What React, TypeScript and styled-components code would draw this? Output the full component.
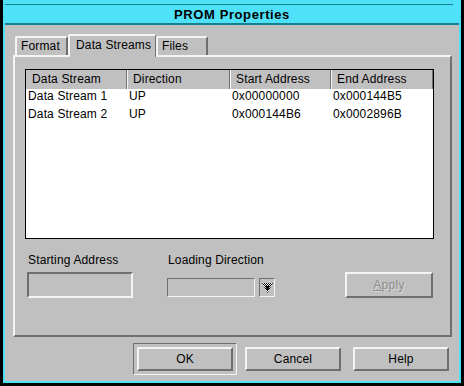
import React from 'react';
import styled, { createGlobalStyle, css } from 'styled-components';

const light = '#f4f4f4';
const dark = '#6f6f6f';
const face = '#c0c0c0';
const cyan = '#4fe1f8';
const teal = '#17808f';

const Global = createGlobalStyle`
  html, body { margin: 0; padding: 0; background: #000; }
  body { font-family: "Liberation Sans", Arial, sans-serif; font-size: 12px; color: #000; letter-spacing: 0.15px; }
`;

const Screen = styled.div`
  width: 464px;
  height: 386px;
  box-sizing: border-box;
  padding: 0 3px 3px 3px;
  background: #000;
  display: flex;
`;

const Frame = styled.div`
  flex: 1;
  display: flex;
  flex-direction: column;
  background: ${cyan};
  padding: 0 2px 2px 2px;
`;

const TitleBar = styled.div`
  height: 25px;
  box-sizing: border-box;
  padding-top: 4px;
  border-bottom: 2px solid ${teal};
  display: flex;
`;

const TitleInner = styled.div`
  flex: 1;
  border-top: 1px solid ${teal};
  margin-right: 6px;
  display: flex;
  align-items: center;
  justify-content: center;
  font-weight: bold;
  font-size: 13px;
  letter-spacing: 0.6px;
  padding-left: 6px;
`;

const Client = styled.div`
  flex: 1;
  background: ${face};
  display: flex;
  flex-direction: column;
  padding: 9px 7px 6px 8px;
`;

const TabStrip = styled.div`
  display: flex;
  align-items: flex-end;
  height: 21px;
  padding-left: 2px;
  position: relative;
  z-index: 1;
`;

const Tab = styled.div<{ $w: number; $active?: boolean }>`
  width: ${p => p.$w}px;
  box-sizing: border-box;
  height: 19px;
  border-top: 2px solid ${light};
  border-left: 2px solid ${light};
  border-right: 2px solid ${dark};
  border-top-left-radius: 2px;
  border-top-right-radius: 2px;
  padding-left: 4px;
  line-height: 16px;
  background: ${face};
  white-space: nowrap;
  ${p => p.$active && css`
    height: 23px;
    margin-bottom: -2px;
    padding-left: 6px;
    line-height: 18px;
    border-right-width: 1px;
  `}
`;

const Panel = styled.div`
  width: 439px;
  height: 282px;
  box-sizing: border-box;
  border: 2px solid;
  border-color: ${light} ${dark} ${dark} ${light};
  padding: 12px 16px 0 10px;
  display: flex;
  flex-direction: column;
`;

const Table = styled.div`
  width: 409px;
  height: 170px;
  box-sizing: border-box;
  border: 1px solid #000;
  background: #fff;
`;

const cols = '101px 103px 101px 102px';

const HeaderRow = styled.div`
  display: grid;
  grid-template-columns: ${cols};
  height: 19px;
  background: ${face};
`;

const HeaderCell = styled.div<{ $first?: boolean }>`
  border-left: 1px solid ${p => (p.$first ? face : light)};
  border-right: 1px solid ${dark};
  padding-left: 5px;
  line-height: 19px;
  white-space: nowrap;
`;

const Row = styled.div`
  display: grid;
  grid-template-columns: ${cols};
  height: 18px;
`;

const Cell = styled.div`
  padding-left: 2px;
  line-height: 14px;
  white-space: nowrap;
`;

const Controls = styled.div`
  display: flex;
  align-items: flex-start;
  margin-top: 14px;
`;

const Group = styled.div<{ $ml: number }>`
  display: flex;
  flex-direction: column;
  margin-left: ${p => p.$ml}px;
`;

const Label = styled.div<{ $mb: number }>`
  line-height: 14px;
  margin-bottom: ${p => p.$mb}px;
  padding-left: 1px;
  white-space: nowrap;
`;

const TextField = styled.div`
  width: 106px;
  height: 26px;
  box-sizing: border-box;
  border: 2px solid;
  border-color: ${dark} ${light} ${light} ${dark};
`;

const Combo = styled.div`
  display: flex;
  gap: 4px;
`;

const ComboField = styled.div`
  width: 88px;
  height: 19px;
  box-sizing: border-box;
  border: 1px solid;
  border-color: ${dark} ${light} ${light} ${dark};
`;

const ArrowBox = styled.div`
  width: 16px;
  height: 19px;
  box-sizing: border-box;
  border: 1px solid;
  border-color: ${dark} ${light} ${light} ${dark};
  display: flex;
  align-items: center;
  justify-content: center;
`;

const raised = css`
  box-sizing: border-box;
  border: 2px solid;
  border-color: ${light} ${dark} ${dark} ${light};
  background: ${face};
  display: flex;
  align-items: center;
  justify-content: center;
  font-size: 12px;
`;

const ApplyButton = styled.div`
  ${raised};
  width: 88px;
  height: 26px;
  margin-left: auto;
  margin-right: 1px;
  margin-top: 19px;
  color: #8c8c8c;
  text-shadow: 1px 1px 0 #d8d8d8;
  letter-spacing: 0.3px;
`;

const ButtonRow = styled.div`
  display: flex;
  justify-content: flex-end;
  gap: 4px;
  margin-top: 6px;
  margin-right: -1px;
`;

const ButtonSlot = styled.div<{ $default?: boolean }>`
  width: 104px;
  height: 32px;
  box-sizing: border-box;
  padding: 3px;
  border: 1px solid transparent;
  ${p => p.$default && css`
    border-color: ${dark} ${light} ${light} ${dark};
  `}
`;

const Button = styled.div`
  ${raised};
  width: 96px;
  height: 24px;
`;

const DownArrow = () => (
  <svg width="11" height="10" viewBox="0 0 11 10">
    <defs>
      <pattern id="dither" width="2" height="2" patternUnits="userSpaceOnUse">
        <rect width="2" height="2" fill="#fff" />
        <rect width="1" height="1" fill="#000" />
        <rect x="1" y="1" width="1" height="1" fill="#000" />
      </pattern>
    </defs>
    <polygon points="0,0 11,0 5.5,10" fill="url(#dither)" />
    <polygon points="3,3 8,3 5.5,8" fill="#000" />
  </svg>
);

const rows = [
  ['Data Stream 1', 'UP', '0x00000000', '0x000144B5'],
  ['Data Stream 2', 'UP', '0x000144B6', '0x0002896B'],
];

export default function App() {
  return (
    <>
      <Global />
      <Screen>
        <Frame>
          <TitleBar>
            <TitleInner>PROM Properties</TitleInner>
          </TitleBar>
          <Client>
            <TabStrip>
              <Tab $w={53}>Format</Tab>
              <Tab $w={88} $active>Data Streams</Tab>
              <Tab $w={52}>Files</Tab>
            </TabStrip>
            <Panel>
              <Table>
                <HeaderRow>
                  <HeaderCell $first>Data Stream</HeaderCell>
                  <HeaderCell>Direction</HeaderCell>
                  <HeaderCell>Start Address</HeaderCell>
                  <HeaderCell>End Address</HeaderCell>
                </HeaderRow>
                {rows.map(r => (
                  <Row key={r[0]}>
                    {r.map((c, i) => (
                      <Cell key={i}>{c}</Cell>
                    ))}
                  </Row>
                ))}
              </Table>
              <Controls>
                <Group $ml={2}>
                  <Label $mb={5}>Starting Address</Label>
                  <TextField />
                </Group>
                <Group $ml={34}>
                  <Label $mb={11}>Loading Direction</Label>
                  <Combo>
                    <ComboField />
                    <ArrowBox>
                      <DownArrow />
                    </ArrowBox>
                  </Combo>
                </Group>
                <ApplyButton>
                  <u>A</u>pply
                </ApplyButton>
              </Controls>
            </Panel>
            <ButtonRow>
              <ButtonSlot $default>
                <Button>OK</Button>
              </ButtonSlot>
              <ButtonSlot>
                <Button>Cancel</Button>
              </ButtonSlot>
              <ButtonSlot>
                <Button>Help</Button>
              </ButtonSlot>
            </ButtonRow>
          </Client>
        </Frame>
      </Screen>
    </>
  );
}
